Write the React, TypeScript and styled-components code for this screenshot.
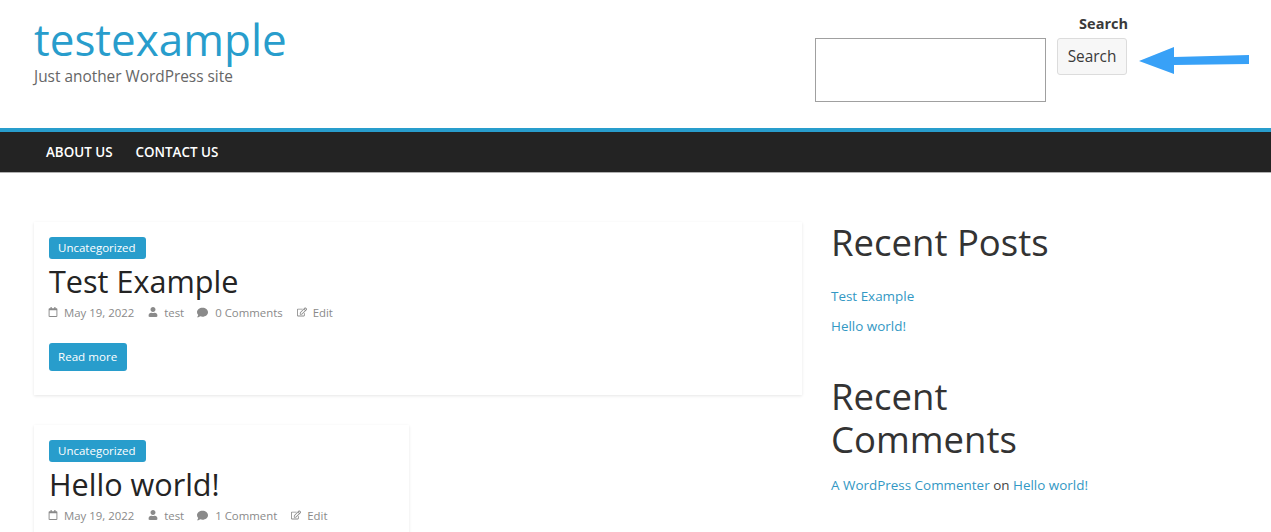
import React from 'react'
import styled, { createGlobalStyle } from 'styled-components'
import { FaRegCalendar, FaUser, FaComment, FaRegEdit } from 'react-icons/fa'

const BLUE = '#289dcc'

const GlobalStyle = createGlobalStyle`
  html, body {
    margin: 0;
    padding: 0;
    background: #fff;
    font-family: "Open Sans", "Liberation Sans", sans-serif;
    overflow: hidden;
  }
`

const Page = styled.div`
  width: 1271px;
  height: 532px;
  overflow: hidden;
  position: relative;
`

const Header = styled.header`
  height: 128px;
  display: flex;
  justify-content: space-between;
  padding: 0 0 0 34px;
  box-sizing: border-box;
`

const Branding = styled.div`
  padding-top: 14px;
`

const SiteTitle = styled.a`
  display: block;
  font-size: 44px;
  line-height: 50px;
  color: ${BLUE};
`

const Tagline = styled.p`
  margin: 2px 0 0;
  font-size: 15.4px;
  line-height: 22px;
  color: #666;
`

const SearchForm = styled.form`
  display: grid;
  grid-template-columns: 231px 70px;
  column-gap: 11px;
  align-content: start;
  margin-right: 144px;
  padding-top: 14px;
`

const SearchLabel = styled.label`
  grid-column: 1 / 3;
  justify-self: end;
  margin-right: -1px;
  font-size: 14.5px;
  font-weight: 700;
  line-height: 20px;
  height: 24px;
  color: #3a3a3a;
`

const SearchInput = styled.input`
  width: 231px;
  height: 64px;
  box-sizing: border-box;
  border: 1px solid #a0a0a0;
  background: #fff;
`

const SearchButton = styled.button`
  width: 70px;
  height: 37px;
  box-sizing: border-box;
  padding: 0 0 1px;
  font-family: inherit;
  font-size: 15.4px;
  color: #3a3a3a;
  background: #f7f7f7;
  border: 1px solid #dcdcdc;
  border-radius: 3px;
`

const ArrowIcon = styled.svg`
  position: absolute;
  left: 1138px;
  top: 46px;
`

const Nav = styled.nav`
  height: 45px;
  box-sizing: border-box;
  border-top: 4px solid ${BLUE};
  border-bottom: 1px solid #b0b0b0;
  background: #232323;
  display: flex;
  align-items: center;
  gap: 23px;
  padding: 0 0 0 46px;
`

const NavLink = styled.a`
  font-size: 13.4px;
  font-weight: 600;
  color: #fff;
  text-transform: uppercase;
`

const Main = styled.main`
  display: grid;
  grid-template-columns: 768px 1fr;
  column-gap: 30px;
  padding: 49px 0 0 34px;
`

const Posts = styled.div`
  display: flex;
  flex-direction: column;
  gap: 30px;
  align-items: flex-start;
`

const Card = styled.article<{ $wide?: boolean }>`
  width: ${(p) => (p.$wide ? '768px' : '375px')};
  height: ${(p) => (p.$wide ? '173px' : '200px')};
  box-sizing: border-box;
  padding: 15px 15px 0;
  background: #fff;
  box-shadow: 0 1px 3px rgba(0, 0, 0, 0.1);
`

const Category = styled.a`
  display: inline-block;
  height: 22px;
  line-height: 22px;
  padding: 0 10px 0 9px;
  font-size: 11.5px;
  color: #fff;
  background: ${BLUE};
  border-radius: 3px;
  vertical-align: top;
`

const PostTitle = styled.h2`
  margin: 1px 0 1px;
  font-size: 30.6px;
  line-height: 42px;
  font-weight: 400;
  color: #242424;
`

const Meta = styled.div`
  display: flex;
  align-items: center;
  margin: 1px 0 0 -1px;
  height: 18px;
  font-size: 11.4px;
  color: #8a8a8a;
`

const MetaItem = styled.span<{ $right: number; $icon?: number; $gap?: number }>`
  display: inline-flex;
  align-items: center;
  gap: ${(p) => p.$gap ?? 6}px;
  margin-right: ${(p) => p.$right}px;

  svg {
    width: ${(p) => p.$icon ?? 10}px;
    height: ${(p) => p.$icon ?? 10}px;
  }
`

const ReadMore = styled.a`
  display: inline-block;
  margin-top: 22px;
  height: 28px;
  line-height: 28px;
  padding: 0 10px 0 9px;
  font-size: 11.6px;
  color: #fff;
  background: ${BLUE};
  border-radius: 3px;
`

const Sidebar = styled.aside`
  display: flex;
  flex-direction: column;
  margin-left: -1px;
  margin-top: -1px;
`

const WidgetTitle = styled.h3`
  margin: 0;
  width: 300px;
  font-size: 36.5px;
  line-height: 43px;
  font-weight: 400;
  color: #333;
`

const LinkList = styled.ul`
  list-style: none;
  margin: 21px 0 40px;
  padding: 0;
  display: flex;
  flex-direction: column;
  gap: 10px;
`

const LinkItem = styled.li`
  height: 20px;
  line-height: 20px;
`

const SideText = styled.p`
  margin: 14px 0 0;
  font-size: 13.45px;
  line-height: 20px;
  color: #444;
`

const SideLink = styled.a`
  font-size: 13.45px;
  line-height: 20px;
  color: #3398c4;
`

function PostMeta({ comments }: { comments: string }) {
  return (
    <Meta>
      <MetaItem $right={14}>
        <FaRegCalendar />
        May 19, 2022
      </MetaItem>
      <MetaItem $right={13}>
        <FaUser />
        test
      </MetaItem>
      <MetaItem $right={14} $icon={11} $gap={7}>
        <FaComment />
        {comments}
      </MetaItem>
      <MetaItem $right={0}>
        <FaRegEdit />
        Edit
      </MetaItem>
    </Meta>
  )
}

export default function App() {
  return (
    <Page>
      <GlobalStyle />
      <Header>
        <Branding>
          <SiteTitle>testexample</SiteTitle>
          <Tagline>Just another WordPress site</Tagline>
        </Branding>
        <SearchForm>
          <SearchLabel>Search</SearchLabel>
          <SearchInput />
          <SearchButton type="button">Search</SearchButton>
        </SearchForm>
      </Header>
      <ArrowIcon width="112" height="30" viewBox="0 0 112 30">
        <path d="M1 15 L36 1 L36 11 L111 9 L111 18 L36 19 L36 28 Z" fill="#38a1f7" />
      </ArrowIcon>
      <Nav>
        <NavLink>About Us</NavLink>
        <NavLink>Contact Us</NavLink>
      </Nav>
      <Main>
        <Posts>
          <Card $wide>
            <Category>Uncategorized</Category>
            <PostTitle>Test Example</PostTitle>
            <PostMeta comments="0 Comments" />
            <ReadMore>Read more</ReadMore>
          </Card>
          <Card>
            <Category>Uncategorized</Category>
            <PostTitle>Hello world!</PostTitle>
            <PostMeta comments="1 Comment" />
          </Card>
        </Posts>
        <Sidebar>
          <WidgetTitle>Recent Posts</WidgetTitle>
          <LinkList>
            <LinkItem>
              <SideLink>Test Example</SideLink>
            </LinkItem>
            <LinkItem>
              <SideLink>Hello world!</SideLink>
            </LinkItem>
          </LinkList>
          <WidgetTitle>
            Recent
            <br />
            Comments
          </WidgetTitle>
          <SideText>
            <SideLink>A WordPress Commenter</SideLink> on <SideLink>Hello world!</SideLink>
          </SideText>
        </Sidebar>
      </Main>
    </Page>
  )
}
